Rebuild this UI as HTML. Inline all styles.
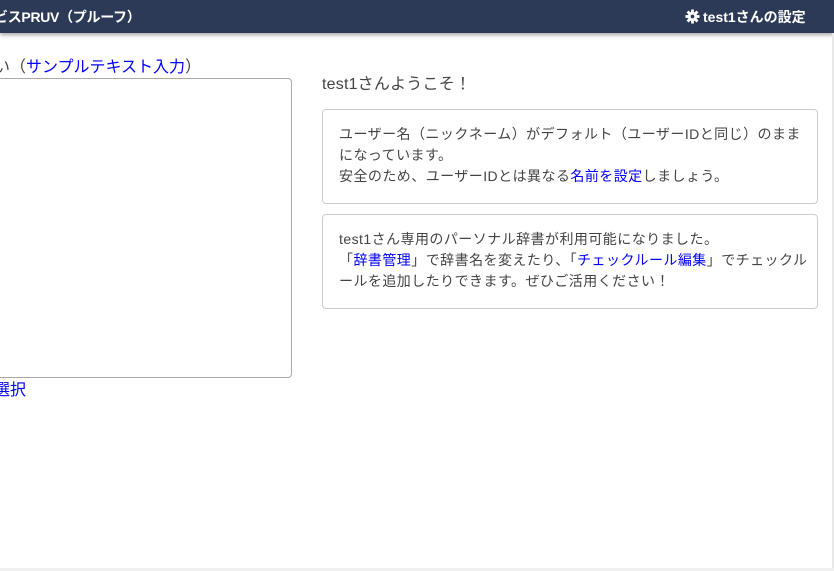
<!DOCTYPE html>
<html><head><meta charset="utf-8"><style>
*{margin:0;padding:0;box-sizing:border-box}
body{width:834px;height:571px;overflow:hidden;background:#fff;position:relative;font-family:"Liberation Sans","Noto Sans CJK JP",sans-serif;color:#444}
.nav{position:absolute;left:0;top:0;width:834px;height:33px;background:#2c3a57;box-shadow:0 2px 4px rgba(0,0,0,.35);color:#fff;font-size:14px}
.box{position:absolute;left:322px;width:496px;border:1px solid #ccc;border-radius:4px;padding:14px 16px;font-size:14px;line-height:21px;color:#444;letter-spacing:0.45px;white-space:nowrap;overflow:hidden}
a{color:#00f;text-decoration:none}
</style></head><body>
<div class="nav">
<div style="position:absolute;left:-6px;top:7px;font-weight:bold;letter-spacing:-0.3px">ビスPRUV（プルーフ）</div>
<div style="position:absolute;left:685px;top:7px;font-weight:bold">
<svg width="15" height="15" viewBox="0 0 16 16" style="vertical-align:-2px;margin-right:3px"><g fill="#fff"><circle cx="8" cy="8" r="5"/><rect x="6.5" y="0.5" width="3" height="15"/><rect x="0.5" y="6.5" width="15" height="3"/><rect x="6.5" y="0.5" width="3" height="15" transform="rotate(45 8 8)"/><rect x="6.5" y="0.5" width="3" height="15" transform="rotate(-45 8 8)"/></g><circle cx="8" cy="8" r="2" fill="#2c3a57"/></svg>test1さんの設定</div>
</div>
<div style="position:absolute;left:-6px;top:53px;font-size:16px;color:#00f"><span style="color:#444">い（</span>サンプルテキスト入力<span style="color:#444">）</span></div>
<div style="position:absolute;left:-10px;top:78px;width:302px;height:300px;border:1px solid #aaa;border-radius:4px"></div>
<div style="position:absolute;left:-6px;top:382px;font-size:16px;color:#00f;line-height:18px">選択</div>
<div style="position:absolute;left:322px;top:70px;font-size:16px;color:#444;letter-spacing:0.2px">test1さんようこそ！</div>
<div class="box" style="top:109px;height:95px">ユーザー名（ニックネーム）がデフォルト（ユーザーIDと同じ）のまま<br>になっています。<br>安全のため、ユーザーIDとは異なる<a>名前を設定</a>しましょう。</div>
<div class="box" style="top:214px;height:95px">test1さん専用のパーソナル辞書が利用可能になりました。<br>「<a>辞書管理</a>」で辞書名を変えたり、「<a>チェックルール編集</a>」でチェックル<br>ールを追加したりできます。ぜひご活用ください！</div>
<div style="position:absolute;left:832px;top:33px;width:2px;height:538px;background:#e8e8e8"></div>
<div style="position:absolute;left:0;top:568px;width:834px;height:3px;background:#f0f0f0"></div>
</body></html>
